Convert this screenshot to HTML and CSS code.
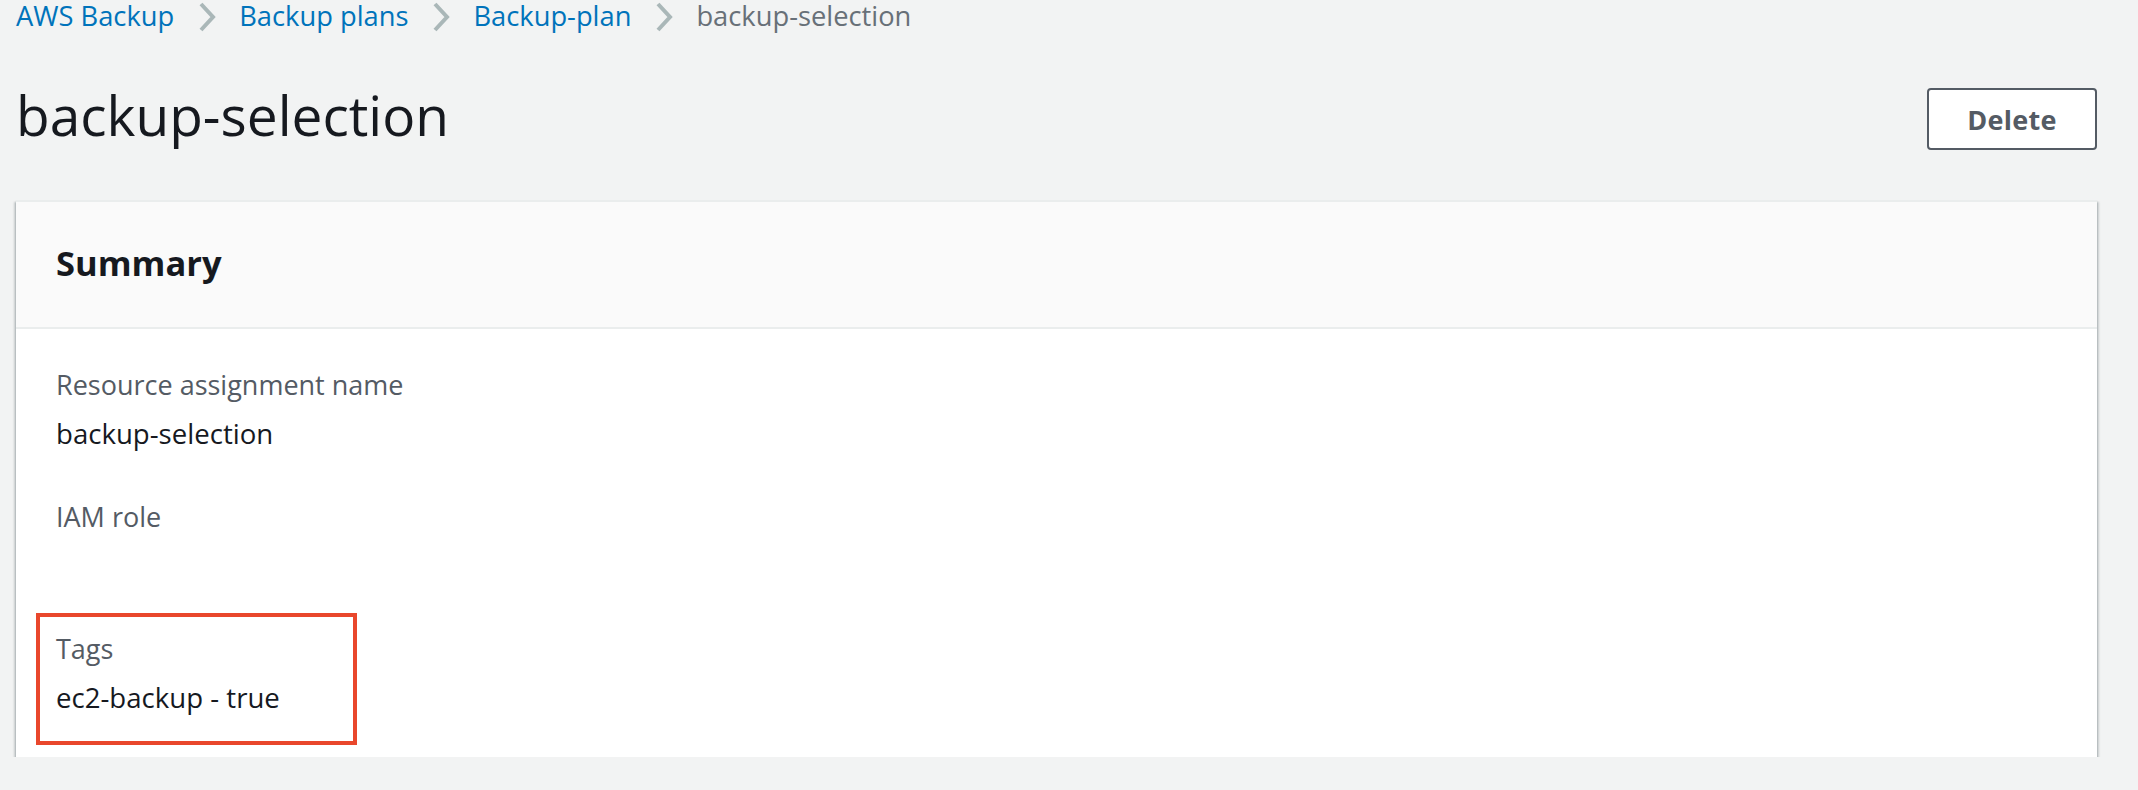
FILE: index.html
```html
<!DOCTYPE html>
<html lang="en">
<head>
<meta charset="utf-8">
<title>backup-selection</title>
<link rel="stylesheet" href="styles.css">
</head>
<body>
<div class="page">
  <nav class="breadcrumbs">
    <a class="crumb link" href="#">AWS Backup</a>
    <svg class="chev" viewBox="0 0 18 30" width="18" height="30"><polyline points="3,2 15,15 3,28" fill="none" stroke="#aab7b8" stroke-width="4"/></svg>
    <a class="crumb link" href="#">Backup plans</a>
    <svg class="chev" viewBox="0 0 18 30" width="18" height="30"><polyline points="3,2 15,15 3,28" fill="none" stroke="#aab7b8" stroke-width="4"/></svg>
    <a class="crumb link" href="#">Backup-plan</a>
    <svg class="chev" viewBox="0 0 18 30" width="18" height="30"><polyline points="3,2 15,15 3,28" fill="none" stroke="#aab7b8" stroke-width="4"/></svg>
    <span class="crumb current">backup-selection</span>
  </nav>

  <header class="page-header">
    <h1 class="title">backup-selection</h1>
    <button class="btn" type="button">Delete</button>
  </header>

  <section class="card">
    <div class="card-header">
      <h2 class="card-title">Summary</h2>
    </div>
    <div class="card-body">
      <div class="kv">
        <div class="kv-label">Resource assignment name</div>
        <div class="kv-value">backup-selection</div>
      </div>
      <div class="kv">
        <div class="kv-label">IAM role</div>
        <div class="kv-value"></div>
      </div>
      <div class="kv highlight">
        <div class="kv-label">Tags</div>
        <div class="kv-value">ec2-backup - true</div>
      </div>
    </div>
  </section>
</div>
</body>
</html>
```

FILE: styles.css
```css
html, body {
  margin: 0;
  padding: 0;
  background: #f2f3f3;
}

body {
  font-family: "Open Sans", "Liberation Sans", sans-serif;
  color: #16191f;
}

.page {
  padding: 0 41px 0 16px;
}

.breadcrumbs {
  display: flex;
  align-items: center;
  height: 32px;
  font-size: 27.3px;
  line-height: 32px;
}

.crumb {
  text-decoration: none;
  white-space: nowrap;
}

.link {
  color: #0073bb;
}

.current {
  color: #687078;
}

.chev {
  display: block;
  margin: 2px 23px 0 24px;
  flex: none;
}

.page-header {
  display: flex;
  justify-content: space-between;
  align-items: flex-start;
  margin-top: 51px;
}

.title {
  margin: 0;
  font-size: 55px;
  line-height: 64px;
  font-weight: 400;
  color: #16191f;
}

.btn {
  margin-top: 5px;
  width: 170px;
  height: 62px;
  border: 2px solid #545b64;
  border-radius: 4px;
  background: #ffffff;
  color: #545b64;
  font-family: "Open Sans", "Liberation Sans", sans-serif;
  font-size: 27px;
  font-weight: 700;
  letter-spacing: 0.3px;
  padding: 0;
  display: flex;
  align-items: center;
  justify-content: center;
}

.card {
  margin-top: 50px;
  background: #ffffff;
  border-top: 2px solid #eaeded;
  box-shadow: 0 2px 2px 0 rgba(0, 28, 36, 0.35), 2px 2px 2px 0 rgba(0, 28, 36, 0.15), -2px 2px 2px 0 rgba(0, 28, 36, 0.15);
}

.card-header {
  background: #fafafa;
  border-bottom: 2px solid #eaeded;
  padding: 39px 40px 42px 40px;
}

.card-title {
  margin: 0;
  font-size: 34.5px;
  line-height: 44px;
  font-weight: 700;
  color: #16191f;
}

.card-body {
  padding: 34px 40px 38px 40px;
  display: grid;
  row-gap: 40px;
}

.kv {
  display: flex;
  flex-direction: column;
}

.kv-label {
  font-size: 27px;
  line-height: 44px;
  color: #545b64;
  margin-bottom: 4px;
}

.kv-value {
  font-size: 27.6px;
  line-height: 44px;
  min-height: 44px;
  color: #16191f;
}

.highlight {
  position: relative;
}

.highlight::after {
  content: "";
  position: absolute;
  top: -14px;
  left: -20px;
  width: 321px;
  bottom: -26px;
  box-sizing: border-box;
  border: 4px solid #e9472c;
  pointer-events: none;
}
```
